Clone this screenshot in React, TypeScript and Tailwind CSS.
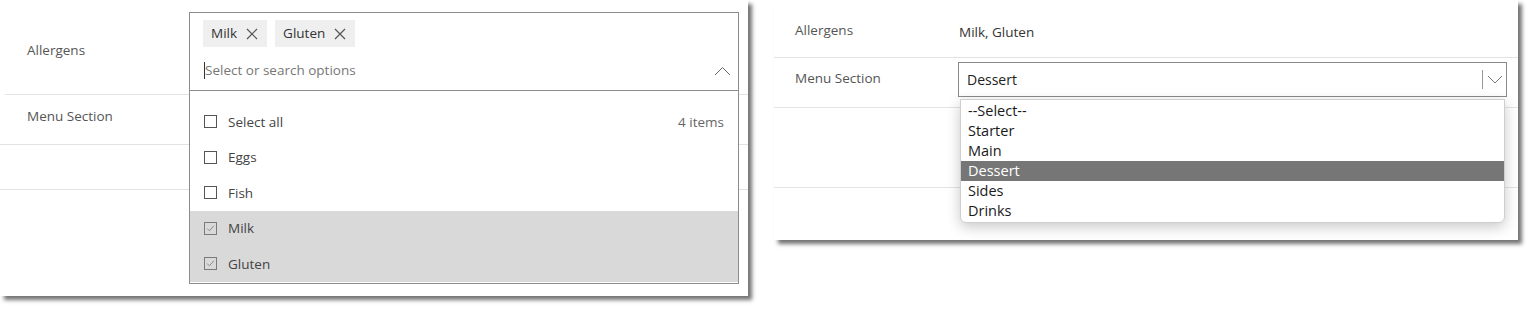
import React from "react";

const font = { fontFamily: '"Open Sans", "Noto Sans", "Liberation Sans", sans-serif' };

function XIcon() {
  return (
    <svg width="12" height="12" viewBox="0 0 12 12" className="shrink-0">
      <path d="M1 1 L11 11 M11 1 L1 11" stroke="#555" strokeWidth="1.2" fill="none" />
    </svg>
  );
}

function Box({ checked }: { checked?: boolean }) {
  return (
    <svg width="13" height="13" viewBox="0 0 13 13" className="shrink-0">
      <rect x="0.5" y="0.5" width="12" height="12" fill="none" stroke={checked ? "#7a7a7a" : "#555"} strokeWidth="1" />
      {checked && <path d="M3.2 6.6 L5.4 8.8 L9.8 3.8" stroke="#8a8a8a" strokeWidth="1" fill="none" />}
    </svg>
  );
}

function Chip({ label }: { label: string }) {
  return (
    <div className="flex h-[27px] items-center gap-[9px] bg-[#efefef] pl-[8px] pr-[9px] text-[13.5px] text-[#333]">
      <span>{label}</span>
      <XIcon />
    </div>
  );
}

function Row({ label, checked, right }: { label: string; checked?: boolean; right?: string }) {
  return (
    <div className={`flex h-[35.5px] items-center gap-[11px] pl-[14px] pr-[14px] ${checked ? "bg-[#d9d9d9]" : ""}`}>
      <Box checked={checked} />
      <span className="text-[13.5px] text-[#444]">{label}</span>
      {right && <span className="ml-auto text-[13.5px] text-[#666]">{right}</span>}
    </div>
  );
}

export default function App() {
  return (
    <div className="flex h-[314px] w-[1536px] items-start bg-white" style={font}>
      {/* Left card */}
      <div className="relative h-[296px] w-[748px] bg-white shadow-[4px_4px_4px_rgba(0,0,0,0.55)]">
        <div className="ml-[5px] h-[95px] border-b border-[#e3e3e3] pl-[22px] pt-[40px]">
          <div className="text-[13.5px] leading-[20px] text-[#555]">Allergens</div>
        </div>
        <div className="h-[50px] border-b border-[#e3e3e3] pl-[27px] pt-[11px]">
          <div className="text-[13.5px] leading-[20px] text-[#555]">Menu Section</div>
        </div>
        <div className="h-[45px] border-b border-[#e3e3e3]" />

        {/* Open multi-select */}
        <div className="absolute left-[189px] top-[12px] flex h-[272px] w-[550px] flex-col border border-[#8c8c8c] bg-white">
          <div className="flex gap-[8px] pl-[13px] pt-[7px]">
            <Chip label="Milk" />
            <Chip label="Gluten" />
          </div>
          <div className="flex h-[43px] items-center pl-[14px] pr-[7px] pt-[4px]">
            <span className="h-[17px] w-px bg-[#333]" />
            <span className="text-[13.5px] text-[#777]">Select or search options</span>
            <svg width="17" height="10" viewBox="0 0 17 10" className="ml-auto">
              <path d="M1 9 L8.5 1.5 L16 9" stroke="#666" strokeWidth="1" fill="none" />
            </svg>
          </div>
          <div className="h-px bg-[#8c8c8c]" />
          <div className="pt-[13px]">
            <Row label="Select all" right="4 items" />
            <Row label="Eggs" />
            <Row label="Fish" />
            <Row label="Milk" checked />
            <Row label="Gluten" checked />
          </div>
        </div>
      </div>

      {/* Right card */}
      <div className="relative ml-[26px] h-[240px] w-[744px] bg-white shadow-[4px_4px_4px_rgba(0,0,0,0.55)]">
        <div className="flex h-[58px] border-b border-[#e3e3e3] pt-[20px]">
          <div className="w-[185px] pl-[21px] text-[13.5px] leading-[20px] text-[#555]">Allergens</div>
          <div className="pt-[2px] text-[13.5px] leading-[20px] text-[#333]">Milk, Gluten</div>
        </div>
        <div className="flex h-[50px] border-b border-[#e3e3e3]">
          <div className="w-[184px] pl-[21px] pt-[10px] text-[13.5px] leading-[20px] text-[#555]">Menu Section</div>
          <div className="mt-[4px] flex h-[35px] w-[549px] items-center border border-[#8a8a8a] bg-white pl-[8px] pr-[3px]">
            <span className="text-[14px] text-[#222]">Dessert</span>
            <span className="ml-auto h-[19px] w-px bg-[#999]" />
            <svg width="16" height="9" viewBox="0 0 16 9" className="ml-[4px]">
              <path d="M1 1 L8 8 L15 1" stroke="#777" strokeWidth="1" fill="none" />
            </svg>
          </div>
        </div>
        <div className="h-[80px] border-b border-[#e3e3e3]" />

        {/* Native-like listbox */}
        <div className="absolute left-[186px] top-[99px] w-[545px] rounded-b-[6px] border border-[#cfcfcf] bg-white py-px text-[14.5px] leading-[20px] text-[#1a1a1a] shadow-[0_4px_14px_rgba(0,0,0,0.22)]">
          <div className="pl-[7px]">--Select--</div>
          <div className="pl-[7px]">Starter</div>
          <div className="pl-[7px]">Main</div>
          <div className="bg-[#767676] pl-[7px] text-white">Dessert</div>
          <div className="pl-[7px]">Sides</div>
          <div className="pl-[7px]">Drinks</div>
        </div>
      </div>
    </div>
  );
}
